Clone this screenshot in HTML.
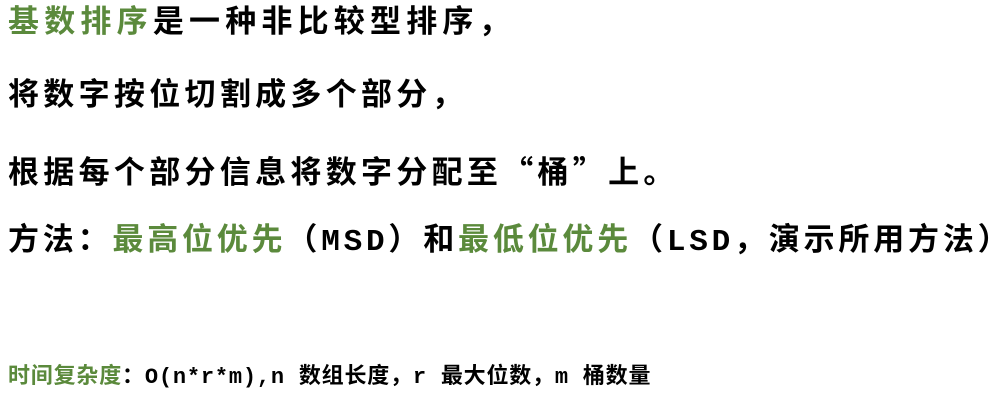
<!DOCTYPE html>
<html><head><meta charset="utf-8"><style>
body{margin:0;width:999px;height:415px;background:#fff;overflow:hidden;font-family:"Liberation Mono","Noto Sans CJK SC",monospace;color:#000;}
.l{position:absolute;left:8px;font-size:31px;letter-spacing:3.8px;font-weight:bold;white-space:nowrap;line-height:40px;}
.g{color:#5b8a3c;}
.s{position:absolute;left:8px;top:362px;font-size:22px;letter-spacing:0.8px;font-weight:bold;white-space:nowrap;line-height:32px;}
</style></head><body>
<div class="l" style="top:5px;letter-spacing:5.2px"><span class="g">基数排序</span>是一种非比较型排序，</div>
<div class="l" style="top:78px;letter-spacing:4.3px">将数字按位切割成多个部分，</div>
<div class="l" style="top:150px;letter-spacing:4.3px;font-family:'Noto Sans CJK SC',sans-serif;height:40px;line-height:40px">根据每个部分信息将数字分配至“桶”上。</div>
<div class="l" style="top:223px">方法：<span class="g">最高位优先</span>（MSD）和<span class="g">最低位优先</span>（LSD，演示所用方法）</div>
<div class="s"><span class="g">时间复杂度</span>：O(n*r*m),n 数组长度，r 最大位数，m 桶数量</div>
</body></html>
